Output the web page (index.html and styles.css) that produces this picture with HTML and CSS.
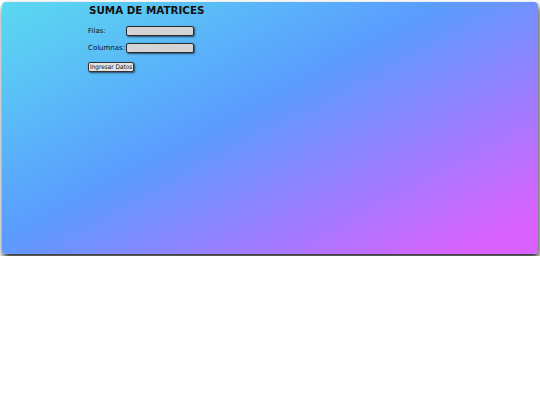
FILE: index.html
```html
<!DOCTYPE html>
<html lang="es">
<head>
<meta charset="utf-8">
<title>Suma de matrices</title>
<link rel="stylesheet" href="styles.css">
</head>
<body>
<div class="panel">
  <div class="content">
    <h1 class="title">SUMA DE MATRICES</h1>
    <div class="row">
      <label class="label" for="filas">Filas:</label>
      <input class="field" id="filas" type="text">
    </div>
    <div class="row">
      <label class="label" for="columnas">Columnas:</label>
      <input class="field" id="columnas" type="text">
    </div>
    <button class="btn" type="button">Ingresar Datos</button>
  </div>
</div>
</body>
</html>
```
FILE: styles.css
```css
html, body {
  margin: 0;
  padding: 0;
  background: #ffffff;
}
body {
  padding: 2px;
  font-family: "DejaVu Sans", Verdana, sans-serif;
}
.panel {
  height: 252px;
  border-radius: 4px;
  background: linear-gradient(152deg, #5ad8f0 0%, #5ac6f5 15%, #5a9cff 44%, #d862ff 92%, #d860ff 100%);
  box-shadow: 1px 4px 6px rgba(0, 0, 0, 0.85);
}
.content {
  padding: 2px 0 0 86px;
  display: flex;
  flex-direction: column;
  align-items: flex-start;
}
.title {
  margin: 0 0 0 1px;
  font-size: 10.35px;
  font-weight: bold;
  color: #111;
  line-height: 12px;
}
.row {
  display: flex;
  align-items: center;
  margin-top: 9px;
  height: 11px;
}
.row + .row {
  margin-top: 6px;
}
.label {
  width: 38px;
  font-size: 7px;
  color: #111;
}
.field {
  box-sizing: border-box;
  width: 68px;
  height: 10px;
  padding: 0;
  border: 1px solid #2a2a2a;
  border-radius: 2px;
  background: #d4d4d4;
  box-shadow: 1px 1px 2px rgba(0, 0, 0, 0.6);
}
.btn {
  margin-top: 9px;
  box-sizing: border-box;
  height: 10px;
  padding: 0 1px;
  font-family: "DejaVu Sans Condensed", "DejaVu Sans", sans-serif;
  font-size: 6.4px;
  line-height: 8px;
  color: #111;
  background: #e4e4e4;
  border: 1px solid #333;
  border-radius: 2px;
  box-shadow: 1px 1px 2px rgba(0, 0, 0, 0.6);
}
```
